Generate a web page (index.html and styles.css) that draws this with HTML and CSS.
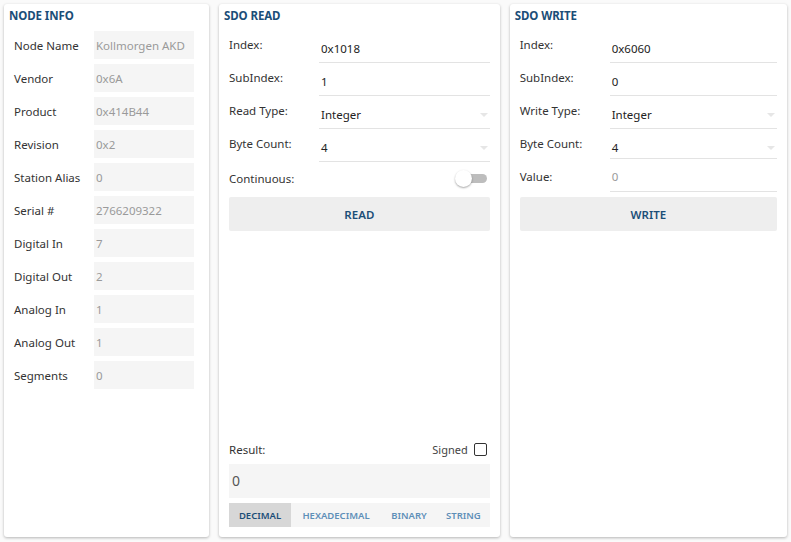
FILE: index.html
```html
<!DOCTYPE html>
<html>
<head>
<meta charset="utf-8">
<link rel="stylesheet" href="styles.css">
</head>
<body>
<div class="app">
  <section class="card node">
    <h2 class="title">NODE INFO</h2>
    <div class="info-list">
      <div class="info-row"><span class="info-label">Node Name</span><span class="info-value">Kollmorgen AKD</span></div>
      <div class="info-row"><span class="info-label">Vendor</span><span class="info-value">0x6A</span></div>
      <div class="info-row"><span class="info-label">Product</span><span class="info-value">0x414B44</span></div>
      <div class="info-row"><span class="info-label">Revision</span><span class="info-value">0x2</span></div>
      <div class="info-row"><span class="info-label">Station Alias</span><span class="info-value">0</span></div>
      <div class="info-row"><span class="info-label">Serial #</span><span class="info-value">2766209322</span></div>
      <div class="info-row"><span class="info-label">Digital In</span><span class="info-value">7</span></div>
      <div class="info-row"><span class="info-label">Digital Out</span><span class="info-value">2</span></div>
      <div class="info-row"><span class="info-label">Analog In</span><span class="info-value">1</span></div>
      <div class="info-row"><span class="info-label">Analog Out</span><span class="info-value">1</span></div>
      <div class="info-row"><span class="info-label">Segments</span><span class="info-value">0</span></div>
    </div>
  </section>

  <section class="card sdo">
    <h2 class="title">SDO READ</h2>
    <div class="form">
      <div class="f-row"><span class="f-label">Index:</span><span class="f-field">0x1018</span></div>
      <div class="f-row"><span class="f-label">SubIndex:</span><span class="f-field">1</span></div>
      <div class="f-row"><span class="f-label">Read Type:</span><span class="f-field select">Integer<i class="caret"></i></span></div>
      <div class="f-row"><span class="f-label">Byte Count:</span><span class="f-field select">4<i class="caret"></i></span></div>
      <div class="f-row plain"><span class="f-label">Continuous:</span><span class="toggle"><span class="knob"></span></span></div>
    </div>
    <button class="action">READ</button>
    <div class="spacer"></div>
    <div class="result-head"><span class="f-label">Result:</span><span class="signed">Signed <span class="checkbox"></span></span></div>
    <div class="result-box">0</div>
    <div class="tabs">
      <span class="tab active">DECIMAL</span>
      <span class="tab">HEXADECIMAL</span>
      <span class="tab">BINARY</span>
      <span class="tab">STRING</span>
    </div>
  </section>

  <section class="card sdo">
    <h2 class="title">SDO WRITE</h2>
    <div class="form">
      <div class="f-row"><span class="f-label">Index:</span><span class="f-field">0x6060</span></div>
      <div class="f-row"><span class="f-label">SubIndex:</span><span class="f-field">0</span></div>
      <div class="f-row"><span class="f-label">Write Type:</span><span class="f-field select">Integer<i class="caret"></i></span></div>
      <div class="f-row short"><span class="f-label">Byte Count:</span><span class="f-field select">4<i class="caret"></i></span></div>
      <div class="f-row level"><span class="f-label">Value:</span><span class="f-field muted">0</span></div>
    </div>
    <button class="action spaced">WRITE</button>
  </section>
</div>
</body>
</html>
```
FILE: styles.css
```css
* { box-sizing: border-box; }
html, body { margin: 0; padding: 0; }
body {
  background: #fafafa;
  font-family: "Noto Sans", "Open Sans", sans-serif;
  font-size: 11.5px;
  color: #333;
}
.app {
  display: flex;
  gap: 10px;
  padding: 4px;
  height: 542px;
}
.card {
  background: #fff;
  border-radius: 3px;
  box-shadow: 0 1px 3px rgba(0,0,0,0.28);
  height: 533px;
  display: flex;
  flex-direction: column;
}
.node { width: 205px; flex: none; }
.sdo { flex: 1; padding-bottom: 10px; }
.title {
  margin: 0;
  padding: 4px 5px 0;
  height: 24px;
  font-size: 11.5px;
  font-weight: 700;
  color: #1b4e78;
  letter-spacing: -0.1px;
}
.info-list {
  display: flex;
  flex-direction: column;
  gap: 5px;
  padding: 3px 15px 0 10px;
}
.info-row {
  display: flex;
  align-items: center;
  height: 28px;
}
.info-label { width: 80px; flex: none; color: #333; }
.info-value {
  flex: 1;
  height: 28px;
  background: #f5f5f5;
  color: #9a9a9a;
  padding: 0 2px;
  display: flex;
  align-items: center;
}
.form { padding: 2px 10px 0; display: flex; flex-direction: column; }
.f-row {
  display: flex;
  height: 33px;
}
.f-row.short { height: 30px; }
.f-label {
  width: 90px;
  flex: none;
  padding-top: 7px;
  color: #333;
}
.f-row.level .f-label { padding-top: 10px; }
.f-row.level .f-field { padding-top: 10px; }
.f-field {
  flex: 1;
  position: relative;
  border-bottom: 1px solid #e3e3e3;
  padding: 11px 0 0 2px;
  color: #222;
}
.f-field.muted { color: #9a9a9a; }
.caret {
  position: absolute;
  right: 2px;
  top: 17px;
  width: 0; height: 0;
  border-left: 4px solid transparent;
  border-right: 4px solid transparent;
  border-top: 4px solid #e6e6e6;
}
.f-row.plain { height: 33px; align-items: center; justify-content: space-between; }
.f-row.plain .f-label { padding-top: 0; }
.toggle {
  position: relative;
  width: 30px; height: 9px;
  margin-right: 3px;
  background: #bdbdbd;
  border-radius: 5px;
}
.knob {
  position: absolute;
  left: -2px; top: -4px;
  width: 17px; height: 17px;
  border-radius: 50%;
  background: #fff;
  box-shadow: 0 1px 2px rgba(0,0,0,0.35);
}
.action {
  margin: 2px 10px 0;
  height: 34px;
  border: none;
  border-radius: 2px;
  background: #eeeeee;
  font-family: inherit;
  font-size: 11.5px;
  font-weight: 600;
  color: #1b4e78;
}
.action.spaced { margin-top: 5px; }
.spacer { flex: 1; }
.result-head {
  display: flex;
  justify-content: space-between;
  align-items: center;
  padding: 0 13px 3px 10px;
  height: 26px;
}
.result-head .f-label { padding-top: 0; }
.signed { display: flex; align-items: center; gap: 6px; color: #444; font-size: 11px; }
.checkbox {
  width: 13px; height: 13px;
  border: 1.5px solid #333;
  border-radius: 2px;
}
.result-box {
  margin: 0 10px;
  height: 34px;
  background: #f5f5f5;
  color: #555;
  font-size: 14px;
  padding: 7px 3px;
}
.tabs {
  margin: 5px 10px 0;
  display: flex;
  background: #f5f5f5;
  height: 24px;
}
.tab {
  display: flex;
  align-items: center;
  justify-content: center;
  font-size: 9.5px;
  font-weight: 600;
  color: #5e8fb8;
  padding: 0 9px;
}
.tab:nth-child(1) { width: 62px; }
.tab:nth-child(2) { width: 90px; }
.tab:nth-child(3) { width: 56px; }
.tab:nth-child(4) { flex: 1; }
.tab.active { background: #d7d7d7; color: #1b4e78; }
```
